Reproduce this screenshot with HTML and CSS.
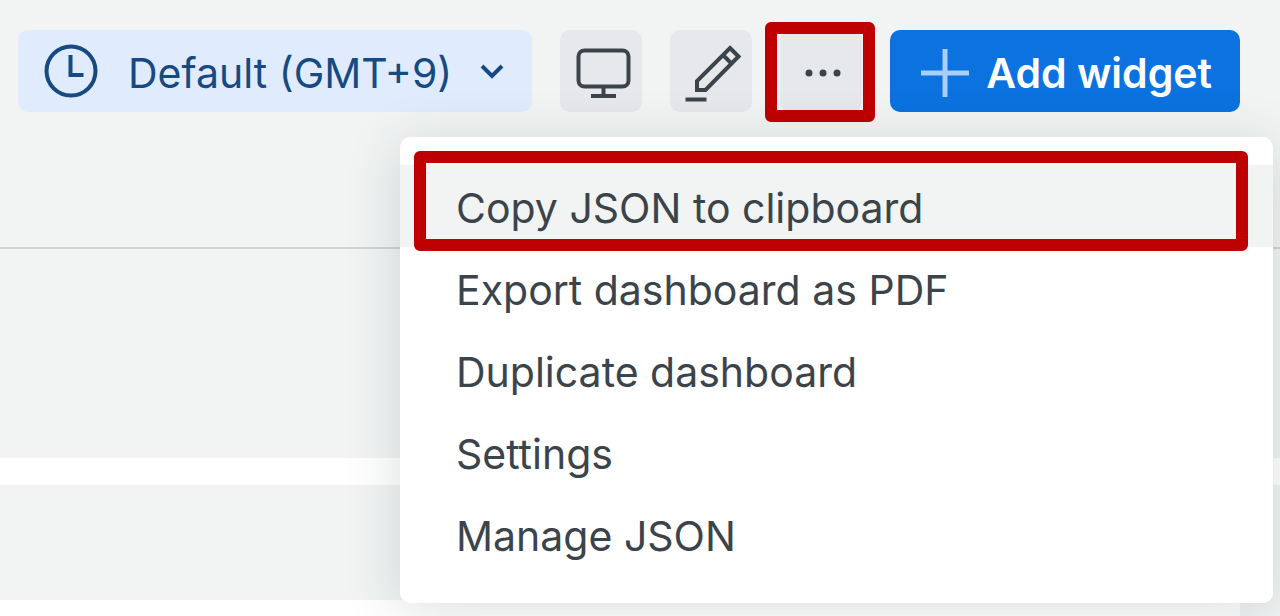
FILE: index.html
```html
<!DOCTYPE html>
<html lang="en">
<head>
<meta charset="UTF-8">
<meta name="viewport" content="width=device-width, initial-scale=1.0">
<title>Dashboard</title>
<link rel="stylesheet" href="styles.css">
</head>
<body>
<header class="header">
<div class="toolbar">
<button type="button" class="btn btn-time">
<svg class="icon" viewBox="0 0 54 54" width="54" height="54" aria-hidden="true">
<circle cx="27" cy="27" r="24.5"/>
<path d="M26.5 11v20h13"/>
</svg>
<span class="time-label">Default (GMT+9)</span>
<svg class="icon chevron" viewBox="0 0 24 16" width="24" height="16" aria-hidden="true">
<path d="M2 3l10 10L22 3"/>
</svg>
</button>

<button type="button" class="btn btn-square" aria-label="Full screen">
<svg class="icon" viewBox="0 0 82 82" width="82" height="82" aria-hidden="true">
<rect x="18.5" y="20.5" width="50" height="36" rx="6"/>
<path d="M43.5 57v8M31 66h25"/>
</svg>
</button>

<button type="button" class="btn btn-square" aria-label="Edit">
<svg class="icon" viewBox="0 0 82 82" width="82" height="82" aria-hidden="true">
<path d="M60 18l8.500 8.500L35.500 60H27v-9z"/>
<path d="M53 25l8.500 8.500M15.500 69.500h21"/>
</svg>
</button>

<div class="more">
<button type="button" class="btn btn-square" aria-label="More options" aria-haspopup="menu" aria-expanded="true">
<svg class="dots" viewBox="0 0 82 82" width="82" height="82" aria-hidden="true">
<circle cx="29" cy="43" r="3.500"/>
<circle cx="43" cy="43" r="3.500"/>
<circle cx="57" cy="43" r="3.500"/>
</svg>
</button>
<span class="mark mark-more"></span>
</div>

<button type="button" class="btn btn-add">
<svg class="plus" viewBox="0 0 50 50" width="50" height="50" aria-hidden="true">
<path d="M25 1v48M1 25h48"/>
</svg>
<span>Add widget</span>
</button>
</div>

<!-- More options menu -->
<div class="menu" role="menu">
<button type="button" class="menu-item active" role="menuitem">Copy JSON to clipboard<span class="mark mark-item"></span></button>
<button type="button" class="menu-item" role="menuitem">Export dashboard as PDF</button>
<button type="button" class="menu-item" role="menuitem">Duplicate dashboard</button>
<button type="button" class="menu-item" role="menuitem">Settings</button>
<button type="button" class="menu-item" role="menuitem">Manage JSON</button>
</div>
</header>

<main class="board">
<section class="strip"></section>
<section class="panel"></section>
<section class="content"></section>
</main>
</body>
</html>
```

FILE: styles.css
```css
* {
box-sizing: border-box;
margin: 0;
padding: 0;
}

body {
font-family: Inter, "Liberation Sans", sans-serif;
font-size: 41px;
line-height: 50px;
color: #3b444b;
background: #f2f4f4;
height: 100vh;
display: flex;
flex-direction: column;
overflow: hidden;
}

button {
font: inherit;
color: inherit;
border: none;
cursor: pointer;
}

svg {
display: block;
flex: none;
}

/* Header */
.header {
position: relative;
height: 249px;
flex: none;
padding: 30px 40px 0 18px;
border-bottom: 2px solid #cfd1d6;
}

.toolbar {
display: flex;
justify-content: flex-end;
gap: 28px;
}

.btn {
height: 82px;
display: flex;
align-items: center;
border-radius: 10px;
background: #e7e8eb;
white-space: nowrap;
}

.btn-square {
width: 82px;
}

.btn-time {
width: 514px;
padding: 0 28px 0 26px;
background: #e0ebfe;
color: #174a82;
}

.time-label {
margin-left: 30px;
padding-top: 4px;
}

.chevron {
margin-left: auto;
}

.icon {
fill: none;
stroke: currentColor;
stroke-width: 4;
}

.dots {
fill: currentColor;
}

.btn-add {
width: 350px;
padding: 4px 28px 0 30px;
justify-content: space-between;
background: #0b72df;
color: #fff;
font-weight: 600;
}

.plus {
stroke: #a9d0fb;
stroke-width: 5;
}

.more {
position: relative;
}

/* Red highlight frames */
.mark {
position: absolute;
border: 12px solid #bf0000;
border-radius: 6px;
pointer-events: none;
}

.mark-more {
inset: -8px -13px -10px -15px;
}

.mark-item {
inset: -14px 25px -4px 14px;
}

/* Menu */
.menu {
position: absolute;
top: 137px;
right: 7px;
width: 873px;
padding: 28px 0;
background: #fff;
border-radius: 10px;
box-shadow: 0 8px 56px rgba(40, 50, 50, 0.16);
}

.menu-item {
position: relative;
display: block;
width: 100%;
height: 82px;
padding: 4px 56px 0;
text-align: left;
background: #fff;
}

.menu-item.active {
z-index: 1;
background: #f2f4f4;
}

/* Dashboard body */
.board {
flex: 1;
display: flex;
flex-direction: column;
}

.strip {
height: 209px;
}

.panel {
height: 142px;
border-top: 27px solid #fff;
}

.content {
flex: 1;
margin-right: 40px;
background: #fff;
}
```
